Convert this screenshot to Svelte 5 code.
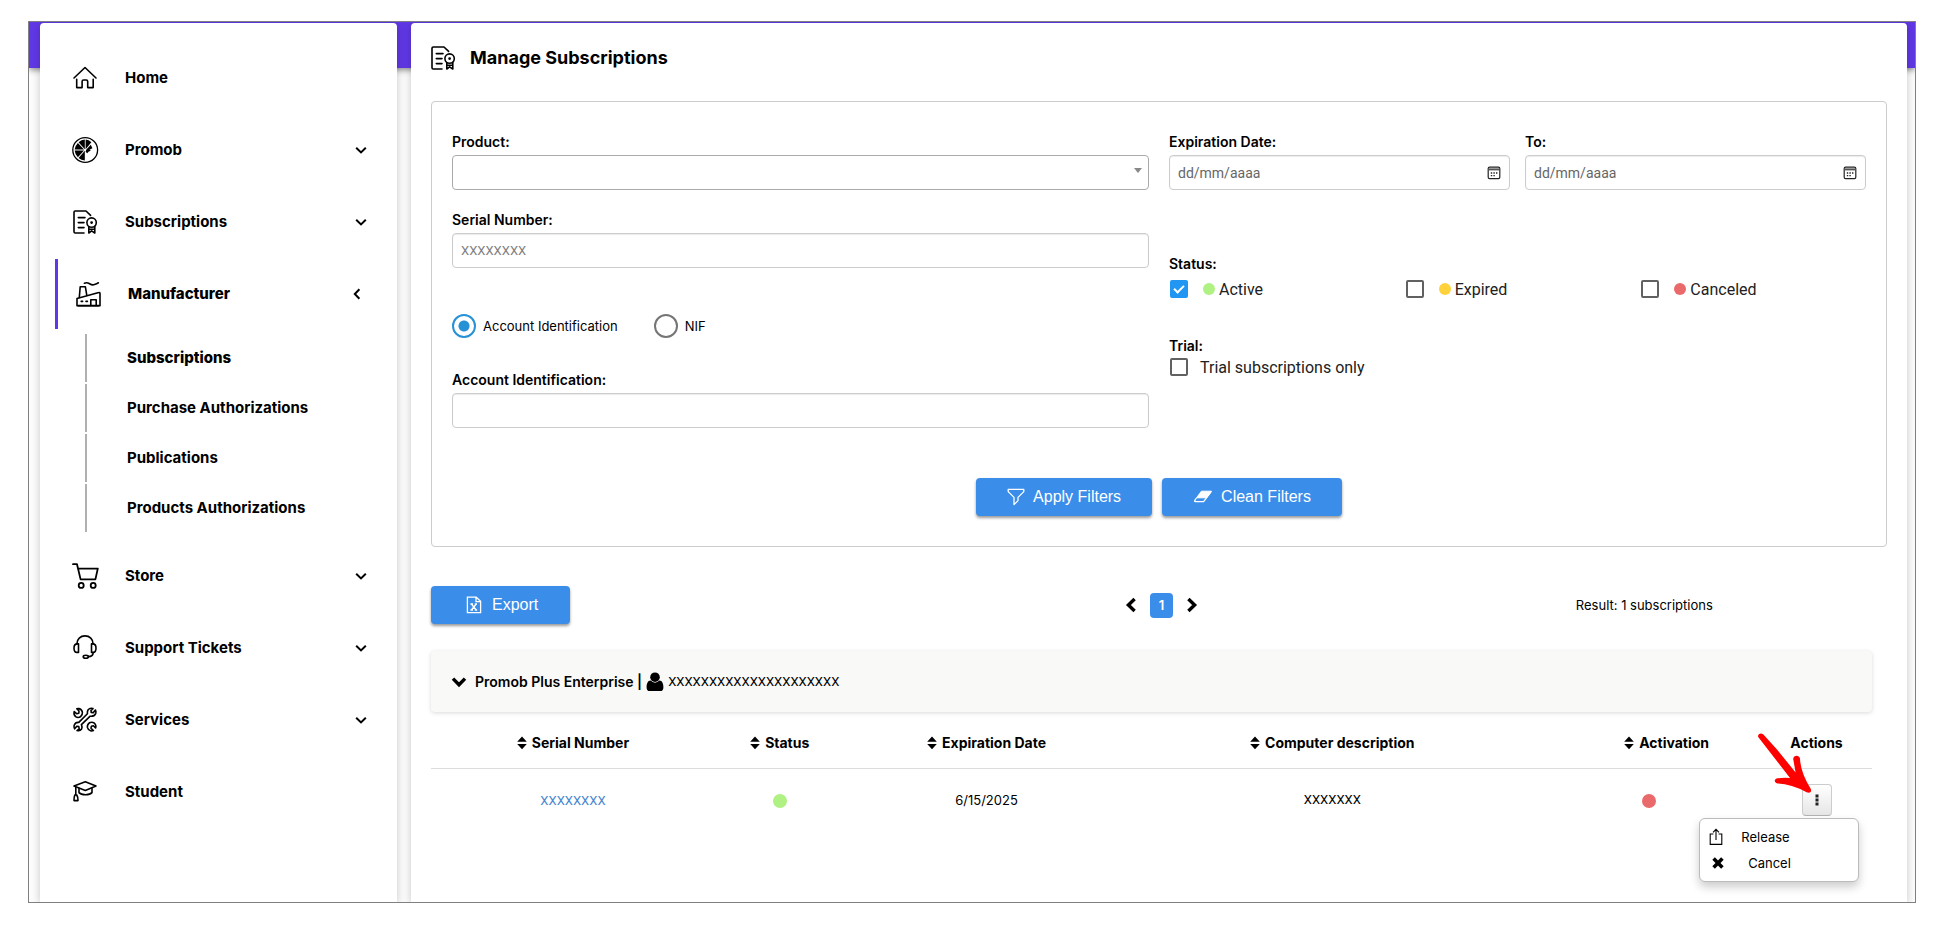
<script>
  const menu = [
    { label: 'Home', icon: 'home' },
    { label: 'Promob', icon: 'promob', expandable: true },
    { label: 'Subscriptions', icon: 'certificate', expandable: true },
    {
      label: 'Manufacturer',
      icon: 'factory',
      expandable: true,
      children: ['Subscriptions', 'Purchase Authorizations', 'Publications', 'Products Authorizations']
    },
    { label: 'Store', icon: 'cart', expandable: true },
    { label: 'Support Tickets', icon: 'headset', expandable: true },
    { label: 'Services', icon: 'tools', expandable: true },
    { label: 'Student', icon: 'student' }
  ];

  const columns = [
    { label: 'Serial Number', key: 'serial', sortable: true },
    { label: 'Status', key: 'status', sortable: true },
    { label: 'Expiration Date', key: 'expiration', sortable: true },
    { label: 'Computer description', key: 'computer', sortable: true },
    { label: 'Activation', key: 'activation', sortable: true },
    { label: 'Actions', key: 'options', sortable: false }
  ];

  let statuses = $state([
    { label: 'Active', color: 'green', checked: true },
    { label: 'Expired', color: 'yellow', checked: false },
    { label: 'Canceled', color: 'red', checked: false }
  ]);

  let activePage = $state('Subscriptions');
  let identification = $state('account');
  let trialOnly = $state(false);
  let groupOpen = $state(true);
  let menuOpen = $state(true);
</script>

{#snippet icon(name)}
  <svg class="icon" viewBox="0 0 24 24" fill="none" stroke="currentColor" stroke-width="1.6" stroke-linecap="round" stroke-linejoin="round" aria-hidden="true">
    {#if name === 'home'}
      <path d="M1 12 12 1.5 23 12" />
      <path d="M3.7 13.2V21.6H9.1V15.5Q9.1 14 10.6 14H13.2Q14.7 14 14.7 15.5V21.6H20.2V13.2" />
    {:else if name === 'promob'}
      <circle cx="12.2" cy="12" r="12.4" stroke-width="1.3" />
      <g fill="currentColor" stroke="none">
        <path d="M11.8 11.2V1.6A10.6 10.6 0 0 0 5.6 4.2Z" />
        <path d="M11 11.4 4.9 4.9A10.6 10.6 0 0 0 1.7 11.4Z" />
        <path d="M11 12.4H1.7A10.6 10.6 0 0 0 4.9 19.2Z" />
        <path d="M11.8 12.8V22.6A10.6 10.6 0 0 1 5.6 19.9Z" />
        <path d="M12.6 11.2V1.6A10.6 10.6 0 0 1 18.4 4.2Z" />
        <path d="m13.4 11.6 4.4-4.8 1.6 3.4-2.8 1.6 1.2 1-2 .8-1.6 1.6-1.6-1.4Z" />
      </g>
    {:else if name === 'certificate'}
      <path d="M11 23H2.2Q1 23 1 21.8V2.2Q1 1 2.2 1H13L17.6 5.4" />
      <path d="M5.3 7.6H12M5.3 12.6H11M5.3 17.6H11" />
      <circle cx="18.6" cy="12.6" r="4.7" />
      <circle cx="18.6" cy="12.6" r=".6" fill="currentColor" />
      <path d="M15.8 16.8V23L18.6 20.8 21.8 23V16.2M15.8 19.2H21.6" />
    {:else if name === 'factory'}
      <path d="M1 16.6 22.8 10.6Q24 10.2 24 11.6V23.8H1Z" />
      <path d="M3.3 15.5 4.2 4.8H9.4L10.8 13.4" />
      <path d="M8.4 1.2Q11 .2 13.6 1.8T18.5 2.6 22.4.8" />
      <path d="M14.8 23.5V17.8H20.2V23.5M5.2 19.4H6.6M10 19.4H11.4M2 23.6H23" />
    {:else if name === 'cart'}
      <path d="M0 .2H4L7.6 15.4H22.4L24.8 4.6H5.2" stroke-width="1.8" />
      <circle cx="8.2" cy="21.4" r="2.5" stroke-width="1.8" />
      <circle cx="20.2" cy="21.4" r="2.5" stroke-width="1.8" />
    {:else if name === 'headset'}
      <path d="M3.9 7.9C3.9 3 7.4-.1 12-.1S20.1 3 20.1 7.9" />
      <path d="M5.5 7.9H4.2C2 7.9 1 10 1 12.2S2.2 16.4 4 16.4H5.5ZM18.5 7.9H19.8C22 7.9 23 10 23 12.2S21.8 16.4 20 16.4H18.5Z" />
      <path d="M20.2 16.6C20 19.6 18.2 20.6 15.4 20.6" />
      <ellipse cx="12.8" cy="20.8" rx="2.6" ry="1.5" />
    {:else if name === 'tools'}
      <path d="M8.4 16.6 17.2 8.2Q21.8 8.6 22.8 5.2 23.2 3.4 22.4 2L20.2 4.8 18.2 4.4 18 2.4 20 .6Q16.8-.4 15 2 14.2 3.4 14.4 5.8L5.8 14.4Q2.4 14 1.2 17.2.6 19.2 1.6 20.8L3.8 18.2 5.8 18.6 6.2 20.8 4 22.6Q7 23.4 8.6 21 9.6 19 8.4 16.6Z" />
      <path d="M7.4 8.8Q9.8 6.8 9.4 4.2 8.8 1.2 6 .6 4.8.4 3.8.8L6 3 5.8 5.2 3.6 5.6 1.2 3.6Q.4 6.6 2.6 8.6 5 10.2 7.4 8.8Z" />
      <path d="M16.4 14.8Q14 16.6 14.4 19.4 15 22 17.6 22.8 19 23.2 20.4 22.6L18 20.2 18.4 18.2 20.4 17.8 22.6 20Q23.6 17 21.2 15 18.8 13.6 16.4 14.8Z" />
    {:else if name === 'student'}
      <path d="M1 6 12.3 1.7 23 6 12.3 10.4Z" />
      <path d="M6 8.4V12.6C8.5 15.4 16.5 15.4 19 12.6V8.4" />
      <path d="M2.8 7V14.8M1.8 15H3.8Q5 17 5 20.6H1Q1 17 1.8 15Z" />
    {/if}
  </svg>
{/snippet}

{#snippet calendar()}
  <svg class="calendar" viewBox="0 0 14 14" aria-hidden="true">
    <rect x="1.2" y="1.2" width="11.6" height="11.4" rx="1.4" fill="none" stroke="#222" stroke-width="1.2" />
    <path d="M1.2 3.4H12.8" stroke="#555" stroke-width="2" />
    <path d="M3.8 7H10.6M3.8 9.6H8" stroke="#222" stroke-width="1.4" stroke-dasharray="1.4 1.2" />
  </svg>
{/snippet}

<div class="frame">
  <div class="topbar"></div>

  <div class="content">
    <nav class="sidebar" aria-label="Main menu">
      {#each menu as item}
        <a href="#{item.icon}" class="menu-item" class:active={item.children}>
          {@render icon(item.icon)}
          <span>{item.label}</span>
          {#if item.expandable}
            <svg class="chevron" viewBox="0 0 12 12" fill="none" stroke="currentColor" stroke-width="2" aria-hidden="true">
              <path d={item.children ? 'M8.4 1.2 3.8 6 8.4 10.8' : 'M1.2 3.8 6 8.4 10.8 3.8'} />
            </svg>
          {/if}
        </a>
        {#if item.children}
          <ul class="submenu">
            {#each item.children as child}
              <li>
                <a href="#{child}" class:current={child === activePage} onclick={() => (activePage = child)}>{child}</a>
              </li>
            {/each}
          </ul>
        {/if}
      {/each}
    </nav>

    <main>
      <header>
        {@render icon('certificate')}
        <h1>Manage Subscriptions</h1>
      </header>

      <form class="filters" onsubmit={(e) => e.preventDefault()}>
        <div class="filter-grid">
          <div>
            <div class="field">
              <label for="product">Product:</label>
              <div class="select-wrap">
                <select id="product">
                  <option value=""></option>
                </select>
              </div>
            </div>
            <div class="field">
              <label for="serial">Serial Number:</label>
              <input id="serial" type="text" placeholder="XXXXXXXX" />
            </div>
            <div class="radios">
              <label><input type="radio" value="account" bind:group={identification} />Account Identification</label>
              <label><input type="radio" value="nif" bind:group={identification} />NIF</label>
            </div>
            <div class="field">
              <label for="account">Account Identification:</label>
              <input id="account" type="text" />
            </div>
          </div>

          <div>
            <div class="dates">
              <div class="field">
                <label for="date-from">Expiration Date:</label>
                <div class="date-wrap">
                  <input id="date-from" type="text" placeholder="dd/mm/aaaa" />
                  {@render calendar()}
                </div>
              </div>
              <div class="field">
                <label for="date-to">To:</label>
                <div class="date-wrap">
                  <input id="date-to" type="text" placeholder="dd/mm/aaaa" />
                  {@render calendar()}
                </div>
              </div>
            </div>

            <div class="status-group" role="group" aria-labelledby="status-title">
              <div class="group-title" id="status-title">Status:</div>
              <div class="statuses">
                {#each statuses as status}
                  <label class="check">
                    <input type="checkbox" bind:checked={status.checked} />
                    <span class="dot small {status.color}"></span>
                    {status.label}
                  </label>
                {/each}
              </div>
            </div>

            <div class="trial-group" role="group" aria-labelledby="trial-title">
              <div class="group-title" id="trial-title">Trial:</div>
              <label class="check">
                <input type="checkbox" bind:checked={trialOnly} />
                Trial subscriptions only
              </label>
            </div>
          </div>
        </div>

        <div class="filter-actions">
          <button type="submit" class="btn">
            <svg width="18" height="18" viewBox="0 0 18 18" fill="none" stroke="currentColor" stroke-width="1.3" stroke-linejoin="round" aria-hidden="true">
              <path d="M1.2 1.4H16.8V3.6L11 9.4V12.6L7 16.6V9.4L1.2 3.6Z" />
            </svg>
            Apply Filters
          </button>
          <button type="reset" class="btn">
            <svg width="20" height="18" viewBox="0 0 20 18" aria-hidden="true">
              <path d="M8.4 3.2H18.4L13.6 9.8H3.6Z" fill="currentColor" stroke="currentColor" stroke-linejoin="round" />
              <path d="M3.4 10 1.6 12.8Q1.4 13.6 2.4 13.6H10.6L18.4 3.4" fill="none" stroke="currentColor" stroke-width="1.3" />
            </svg>
            Clean Filters
          </button>
        </div>
      </form>

      <div class="toolbar">
        <button type="button" class="btn">
          <svg width="16" height="18" viewBox="0 0 16 18" fill="none" stroke="currentColor" stroke-width="1.3" aria-hidden="true">
            <path d="M1.4 1.2H10.2L14.6 5.4V16.6H1.4ZM10 1.4V5.6H14.4" />
            <path d="M5.4 8 10.2 14M10.2 8 5.4 14M4.4 8H7M8.8 8H11M4.4 14H7M8.8 14H11.2" />
          </svg>
          Export
        </button>
        <div class="pagination">
          <button type="button" aria-label="Previous page">
            <svg width="12" height="16" viewBox="0 0 12 16" fill="none" stroke="currentColor" stroke-width="3.4" aria-hidden="true">
              <path d="M9.6 2 3.4 8 9.6 14" />
            </svg>
          </button>
          <button type="button" class="page">1</button>
          <button type="button" aria-label="Next page">
            <svg width="12" height="16" viewBox="0 0 12 16" fill="none" stroke="currentColor" stroke-width="3.4" aria-hidden="true">
              <path d="M2.4 2 8.6 8 2.4 14" />
            </svg>
          </button>
        </div>
        <p>Result: 1 subscriptions</p>
      </div>

      <section class="results">
        <button type="button" class="group-bar" aria-expanded={groupOpen} onclick={() => (groupOpen = !groupOpen)}>
          <svg class="toggle" width="16" height="12" viewBox="0 0 16 12" fill="none" stroke="currentColor" stroke-width="3.4" aria-hidden="true">
            <path d="M2 2.6 8 8.8 14 2.6" />
          </svg>
          <strong>Promob Plus Enterprise |</strong>
          <svg width="18" height="20" viewBox="0 0 18 20" fill="currentColor" aria-hidden="true">
            <circle cx="9" cy="5.2" r="4.8" />
            <path d="M4.6 8.6C1.6 8.6.6 12 .6 15.4.6 17.8 1.8 19 3.8 19H14.2C16.2 19 17.4 17.8 17.4 15.4 17.4 12 16.4 8.6 13.4 8.6Q9 12.8 4.6 8.6Z" />
          </svg>
          <span class="mono">XXXXXXXXXXXXXXXXXXXXX</span>
        </button>

        {#if groupOpen}
          <table>
            <thead>
              <tr>
                {#each columns as column}
                  <th class={column.key}>
                    {#if column.sortable}
                      <button type="button" class="sort">
                        <svg width="10" height="14" viewBox="0 0 10 14" fill="currentColor" aria-hidden="true">
                          <path d="M5 .6 9.8 5.8H.2ZM5 13.2 9.8 8H.2Z" />
                        </svg>
                        {column.label}
                      </button>
                    {:else}
                      {column.label}
                    {/if}
                  </th>
                {/each}
              </tr>
            </thead>
            <tbody>
              <tr>
                <td><a href="#serial" class="mono">XXXXXXXX</a></td>
                <td><span class="dot green"></span></td>
                <td>6/15/2025</td>
                <td class="mono">XXXXXXX</td>
                <td><span class="dot red"></span></td>
                <td>
                  <div class="actions">
                    <button type="button" class="more" aria-label="Actions" aria-expanded={menuOpen} onclick={() => (menuOpen = !menuOpen)}>
                      <svg width="4" height="12" viewBox="0 0 4 12" fill="#222" aria-hidden="true">
                        <path d="M.5 .5h3v3h-3zM.5 4.5h3v3h-3zM.5 8.5h3v3h-3z" />
                      </svg>
                    </button>
                    {#if menuOpen}
                      <div class="dropdown">
                        <button type="button">
                          <svg width="14" height="18" viewBox="0 0 14 18" fill="none" stroke="currentColor" stroke-width="1.1" aria-hidden="true">
                            <path d="M4.4 6H1.2V16.4H12.8V6H9.6M7 12V1.6M4 4.4 7 1.4 10 4.4" />
                          </svg>
                          <span>Release</span>
                        </button>
                        <button type="button">
                          <svg width="18" height="14" viewBox="0 0 18 14" fill="none" stroke="currentColor" stroke-width="3.6" aria-hidden="true">
                            <path d="M4.6 2.6 13.4 11.4M13.4 2.6 4.6 11.4" />
                          </svg>
                          <span>Cancel</span>
                        </button>
                      </div>
                    {/if}
                    <svg class="pointer" width="56" height="62" viewBox="0 0 56 62" aria-hidden="true">
                      <path
                        d="M1.2 5C.4 2 4 .2 6.4 2.6L20 17.6 38.6 40.4 36.2 27C36.6 23 42 22.6 43 26.6Q43.4 40 53.8 57C55 60 52.4 61.4 49.6 60.2Q34 51.6 20.4 51.4C16.6 50.6 17 46.6 20.8 46.2Q27 45.6 33 46Z"
                        fill="#f00"
                      />
                    </svg>
                  </div>
                </td>
              </tr>
            </tbody>
          </table>
        {/if}
      </section>
    </main>
  </div>
</div>

<style>
  :global(body) {
    background: #fff;
  }

  .frame {
    box-sizing: border-box;
    display: flex;
    flex-direction: column;
    min-height: calc(100vh - 68px);
    margin: 21px 18px 47px 28px;
    border: 1px solid #808080;
    overflow: hidden;
    background: #fdfdfd;
    color: #000;
    font-family: Inter, 'Liberation Sans', sans-serif;
    font-size: 13px;
    line-height: 20px;
  }

  button,
  input,
  select {
    box-sizing: border-box;
    margin: 0;
    font: inherit;
    color: inherit;
  }

  button {
    padding: 0;
    border: 0;
    background: none;
    cursor: pointer;
  }

  .topbar {
    flex: none;
    height: 46px;
    background: #6138e6;
    box-shadow: 0 2px 6px rgba(0, 0, 0, 0.45);
  }

  .content {
    flex: 1;
    display: grid;
    grid-template-columns: 357px minmax(0, 1fr);
    gap: 14px;
    margin-top: -45px;
    padding: 0 8px 0 11px;
  }

  .sidebar,
  main {
    position: relative;
    box-sizing: border-box;
    border-radius: 4px 4px 0 0;
    background: #fff;
    box-shadow: 0 2px 10px rgba(0, 0, 0, 0.22);
  }

  .sidebar {
    padding-top: 19px;
    font-size: 15px;
    font-weight: 700;
  }

  .sidebar a {
    color: inherit;
    text-decoration: none;
  }

  .icon {
    flex: none;
    width: 24px;
    height: 24px;
    overflow: visible;
  }

  .menu-item {
    box-sizing: border-box;
    display: flex;
    align-items: center;
    gap: 28px;
    height: 72px;
    padding: 0 30px 0 33px;
  }

  .menu-item.active {
    height: 70px;
    margin: 1px 0 1px 15px;
    padding: 0 34px 0 18px;
    border-left: 3px solid #6138e6;
    font-weight: 800;
  }

  .chevron {
    width: 12px;
    height: 12px;
    margin-left: auto;
  }

  .submenu {
    display: flex;
    flex-direction: column;
    gap: 2px;
    margin: 0;
    padding: 4px 0 8px 45px;
    list-style: none;
  }

  .submenu a {
    display: block;
    padding-left: 40px;
    border-left: 2px solid #b0b0b0;
    line-height: 48px;
  }

  .submenu .current {
    font-weight: 800;
  }

  main {
    padding: 20px 20px 40px;
  }

  header {
    display: flex;
    align-items: center;
    gap: 15px;
    height: 30px;
    margin-bottom: 28px;
  }

  h1 {
    margin: 0;
    font-size: 18px;
    font-weight: 700;
  }

  .filters {
    padding: 30px 20px;
    border: 1px solid #ccc;
    border-radius: 4px;
  }

  .filter-grid {
    display: grid;
    grid-template-columns: 1fr 1fr;
    gap: 20px;
  }

  .field {
    display: flex;
    flex-direction: column;
    gap: 3px;
    margin-bottom: 20px;
  }

  .field:last-child {
    margin-bottom: 0;
  }

  .field label,
  .group-title {
    font-size: 14px;
    font-weight: 600;
  }

  .field input,
  .field select {
    width: 100%;
    height: 35px;
    padding: 0 8px;
    border: 1px solid #ccc;
    border-radius: 4px;
    background: #fff;
    box-shadow: inset 0 1px 1px rgba(0, 0, 0, 0.08);
    font-family: Roboto, sans-serif;
  }

  .field select {
    border-color: #aaa;
    box-shadow: none;
    appearance: none;
  }

  .field input::placeholder {
    color: #808080;
    opacity: 1;
  }

  .select-wrap,
  .date-wrap {
    position: relative;
  }

  .select-wrap::after {
    content: '';
    position: absolute;
    top: 13px;
    right: 7px;
    border: 4px solid transparent;
    border-top: 5px solid #888;
    border-bottom: 0;
    pointer-events: none;
  }

  .date-wrap input {
    font-size: 14px;
  }

  .date-wrap input::placeholder {
    color: #666;
  }

  .calendar {
    position: absolute;
    top: 11px;
    right: 9px;
    width: 14px;
    height: 14px;
  }

  .radios {
    display: flex;
    gap: 36px;
    margin: 46px 0 32px;
  }

  .radios label {
    display: flex;
    align-items: center;
    gap: 7px;
    height: 24px;
  }

  .radios input {
    width: 24px;
    height: 24px;
    border: 2px solid #757575;
    border-radius: 50%;
    appearance: none;
  }

  .radios input:checked {
    border-color: #2791d6;
    background: radial-gradient(circle, #2791d6 0 5px, transparent 6px);
  }

  .dates {
    display: grid;
    grid-template-columns: 1fr 1fr;
    gap: 15px;
  }

  .dates .field {
    margin-bottom: 0;
  }

  .status-group {
    margin-top: 64px;
  }

  .statuses {
    display: grid;
    grid-template-columns: repeat(3, 1fr);
    gap: 10px;
    margin-top: 4px;
  }

  .trial-group {
    margin-top: 36px;
  }

  .check {
    display: flex;
    align-items: center;
    height: 22px;
    color: #212121;
    font: 16px Roboto, sans-serif;
  }

  .check input {
    width: 18px;
    height: 18px;
    margin: 0 12px 0 1px;
    border: 2px solid #616161;
    border-radius: 2px;
    appearance: none;
  }

  .check input:checked {
    position: relative;
    border-color: #2196f3;
    background: #2196f3;
  }

  .check input:checked::after {
    content: '';
    position: absolute;
    top: 3px;
    left: 2px;
    width: 8px;
    height: 4px;
    border: solid #fff;
    border-width: 0 0 2px 2px;
    transform: rotate(-45deg);
  }

  .dot {
    display: inline-block;
    width: 14px;
    height: 14px;
    border-radius: 50%;
    vertical-align: middle;
  }

  .dot.small {
    width: 12px;
    height: 12px;
    margin: 0 4px 0 3px;
  }

  .green {
    background: #aff182;
  }

  .yellow {
    background: #ffd23c;
  }

  .red {
    background: #ea6a6c;
  }

  .filter-actions {
    display: flex;
    justify-content: center;
    gap: 10px;
    margin-top: 50px;
  }

  .btn {
    display: flex;
    align-items: center;
    gap: 8px;
    height: 38px;
    padding: 0 31px;
    border-radius: 4px;
    background: #3a8eea;
    box-shadow: 0 2px 3px rgba(0, 0, 0, 0.4);
    color: #fff;
    font: 16px 'Liberation Sans', Arial, sans-serif;
  }

  .toolbar {
    display: grid;
    grid-template-columns: repeat(3, 1fr);
    align-items: center;
    margin: 39px 0 27px;
  }

  .toolbar .btn {
    gap: 10px;
    width: 139px;
    padding: 0 0 0 35px;
  }

  .toolbar p {
    margin: 0;
    text-align: center;
  }

  .pagination {
    display: flex;
    align-items: center;
    justify-content: center;
    gap: 13px;
    padding-left: 5px;
  }

  .pagination svg {
    display: block;
  }

  .pagination .page {
    width: 23px;
    height: 25px;
    border-radius: 4px;
    background: #3a8eea;
    color: #fff;
    font-weight: 600;
  }

  .results {
    margin-right: 15px;
  }

  .group-bar {
    display: flex;
    align-items: center;
    gap: 4px;
    width: 100%;
    height: 61px;
    padding: 0 20px;
    border-radius: 4px;
    background: #f9f9f7;
    box-shadow: 0 1px 4px rgba(0, 0, 0, 0.15);
  }

  .group-bar strong {
    font-size: 14px;
    font-weight: 600;
  }

  .toggle {
    margin-right: 4px;
  }

  .mono {
    font-family: Roboto, sans-serif;
  }

  table {
    width: 100%;
    border-collapse: collapse;
    table-layout: fixed;
    text-align: center;
  }

  th {
    padding: 21px 0 15px;
    border-bottom: 1px solid #ddd;
    font-size: 14px;
    font-weight: 700;
    white-space: nowrap;
  }

  .sort {
    display: flex;
    align-items: center;
    gap: 5px;
    margin: 0 auto;
  }

  .serial,
  .expiration {
    width: 19.7%;
  }

  .status {
    width: 9%;
  }

  .computer {
    width: 28.3%;
  }

  .activation {
    box-sizing: border-box;
    width: 15.6%;
    padding-left: 36px;
  }

  td {
    padding: 15px 0;
  }

  td a {
    color: #4a86cf;
    text-decoration: none;
  }

  .actions {
    position: relative;
    width: 30px;
    height: 32px;
    margin: 0 auto;
  }

  .more {
    display: flex;
    align-items: center;
    justify-content: center;
    width: 30px;
    height: 32px;
    border: 1px solid #ccc;
    border-bottom-color: #b3b3b3;
    border-radius: 4px;
    background: linear-gradient(#fff, #e6e6e6);
  }

  .dropdown {
    position: absolute;
    top: 34px;
    right: -27px;
    box-sizing: border-box;
    width: 160px;
    padding: 5px 9px;
    border: 1px solid #bbb;
    border-radius: 6px;
    background: #fff;
    box-shadow: 0 5px 10px rgba(0, 0, 0, 0.2);
  }

  .dropdown button {
    display: flex;
    align-items: center;
    width: 100%;
    height: 26px;
  }

  .dropdown span {
    width: 80px;
    margin-left: 3px;
    text-align: center;
  }

  .pointer {
    position: absolute;
    top: -52px;
    right: 19px;
    pointer-events: none;
  }
</style>
